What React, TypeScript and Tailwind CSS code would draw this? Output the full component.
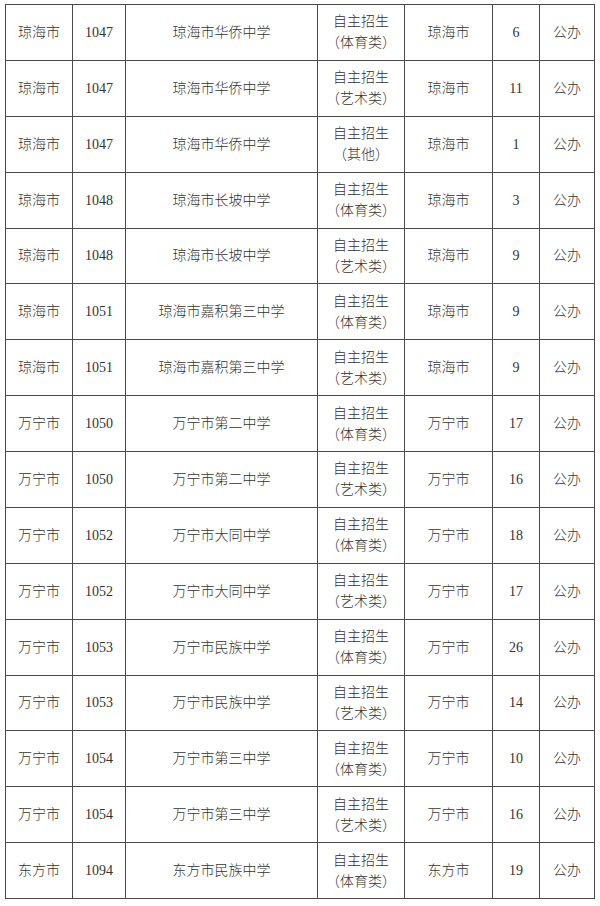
import React from "react";

type Row = [string, string, string, string, string, string, string];

const rows: Row[] = [
  ["琼海市", "1047", "琼海市华侨中学", "体育类", "琼海市", "6", "公办"],
  ["琼海市", "1047", "琼海市华侨中学", "艺术类", "琼海市", "11", "公办"],
  ["琼海市", "1047", "琼海市华侨中学", "其他", "琼海市", "1", "公办"],
  ["琼海市", "1048", "琼海市长坡中学", "体育类", "琼海市", "3", "公办"],
  ["琼海市", "1048", "琼海市长坡中学", "艺术类", "琼海市", "9", "公办"],
  ["琼海市", "1051", "琼海市嘉积第三中学", "体育类", "琼海市", "9", "公办"],
  ["琼海市", "1051", "琼海市嘉积第三中学", "艺术类", "琼海市", "9", "公办"],
  ["万宁市", "1050", "万宁市第二中学", "体育类", "万宁市", "17", "公办"],
  ["万宁市", "1050", "万宁市第二中学", "艺术类", "万宁市", "16", "公办"],
  ["万宁市", "1052", "万宁市大同中学", "体育类", "万宁市", "18", "公办"],
  ["万宁市", "1052", "万宁市大同中学", "艺术类", "万宁市", "17", "公办"],
  ["万宁市", "1053", "万宁市民族中学", "体育类", "万宁市", "26", "公办"],
  ["万宁市", "1053", "万宁市民族中学", "艺术类", "万宁市", "14", "公办"],
  ["万宁市", "1054", "万宁市第三中学", "体育类", "万宁市", "10", "公办"],
  ["万宁市", "1054", "万宁市第三中学", "艺术类", "万宁市", "16", "公办"],
  ["东方市", "1094", "东方市民族中学", "体育类", "东方市", "19", "公办"],
];

const cell = "border border-[#4a4a4a] text-center align-middle p-0 h-[55.875px]";

export default function App() {
  return (
    <div
      className="w-[600px] h-[906px] bg-white pt-[4px] pl-[5px] text-[#333333] text-[14px] font-light"
      style={{ fontFamily: '"Liberation Serif", "Noto Sans CJK SC", serif' }}
    >
      <table className="border-collapse table-fixed w-[589px]">
        <colgroup>
          <col className="w-[67px]" />
          <col className="w-[53px]" />
          <col className="w-[192px]" />
          <col className="w-[87px]" />
          <col className="w-[88px]" />
          <col className="w-[47px]" />
          <col className="w-[55px]" />
        </colgroup>
        <tbody>
          {rows.map((r, i) => (
            <tr key={i}>
              <td className={cell}>{r[0]}</td>
              <td className={cell}>{r[1]}</td>
              <td className={cell}>{r[2]}</td>
              <td className={cell + " leading-[21px]"}>
                <div>自主招生</div>
                <div>（{r[3]}）</div>
              </td>
              <td className={cell}>{r[4]}</td>
              <td className={cell}>{r[5]}</td>
              <td className={cell}>{r[6]}</td>
            </tr>
          ))}
        </tbody>
      </table>
    </div>
  );
}
